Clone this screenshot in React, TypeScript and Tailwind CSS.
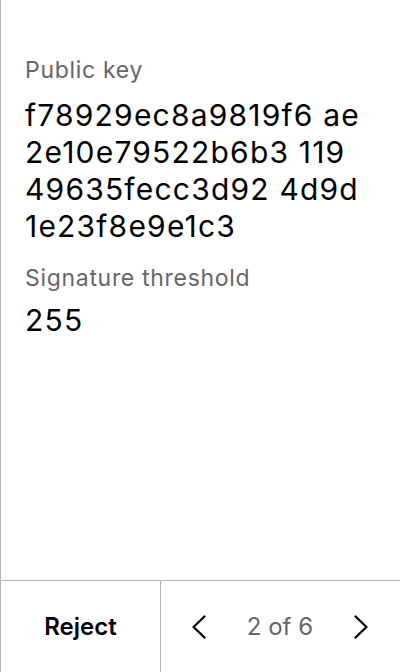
import React from "react";

const keyLines = ["f78929ec8a9819f6 ae", "2e10e79522b6b3 119", "49635fecc3d92 4d9d", "1e23f8e9e1c3"];

function Chevron({ dir }: { dir: "left" | "right" }) {
  return (
    <svg width="14" height="24" viewBox="0 0 14 24" fill="none" stroke="currentColor" strokeWidth="2.3" strokeLinecap="round" strokeLinejoin="round">
      {dir === "left" ? <path d="M12.5 1.5L1.5 12l11 10.5" /> : <path d="M1.5 1.5L12.5 12l-11 10.5" />}
    </svg>
  );
}

export default function App() {
  return (
    <div
      className="h-[672px] w-[400px] bg-white flex flex-col border-l border-[#b3b3b3] text-black"
      style={{ fontFamily: "Inter, 'Noto Sans', sans-serif" }}
    >
      <main className="flex-1 px-6 pt-[55px]">
        <div className="text-[23px] leading-[30px] tracking-[0.03em] text-[#666666]">Public key</div>
        <div className="text-[30px] leading-[37px] tracking-[0.04em] mt-[12px]">
          {keyLines.map((line) => (
            <div key={line}>{line}</div>
          ))}
        </div>
        <div className="text-[23px] leading-[30px] tracking-[0.03em] text-[#666666] mt-[18px]">Signature threshold</div>
        <div className="text-[30px] leading-[37px] tracking-[0.04em] mt-[9px]">255</div>
      </main>
      <footer className="h-[92px] border-t border-[#b3b3b3] flex">
        <button className="w-[160px] border-r border-[#b3b3b3] text-[24px] font-semibold">Reject</button>
        <div className="flex-1 flex items-center justify-between pl-[31px] pr-[32px]">
          <Chevron dir="left" />
          <span className="text-[24px] text-[#666666]">2 of 6</span>
          <Chevron dir="right" />
        </div>
      </footer>
    </div>
  );
}
